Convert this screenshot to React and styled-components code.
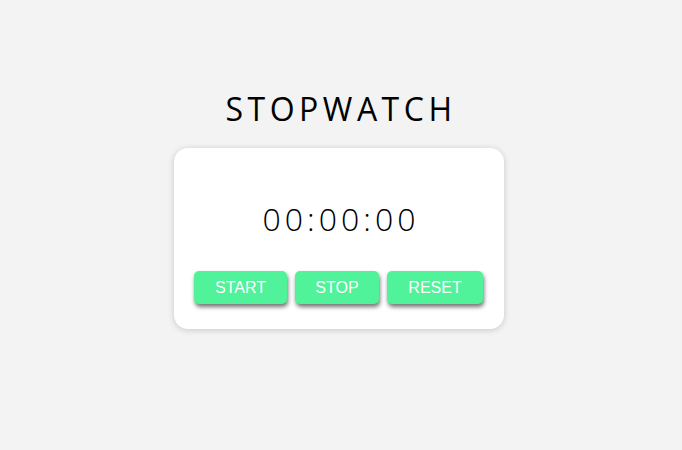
import React, { useState, useEffect, useRef } from 'react'
import styled, { createGlobalStyle } from 'styled-components'

const GlobalStyle = createGlobalStyle`
  html, body {
    margin: 0;
    padding: 0;
    background: #f3f3f3;
  }
`

const Page = styled.div`
  width: 100%;
  min-height: 450px;
  display: flex;
  flex-direction: column;
  align-items: center;
  padding: 90px 4px 0 0;
  box-sizing: border-box;
`

const Title = styled.h1`
  margin: 0 0 20px 0;
  padding-left: 4px;
  font-family: "Open Sans", "DejaVu Sans", sans-serif;
  font-weight: 400;
  font-size: 32px;
  line-height: 38px;
  letter-spacing: 4.5px;
  color: #000;
`

const Card = styled.div`
  width: 330px;
  box-sizing: border-box;
  background: #fff;
  border-radius: 14px;
  box-shadow: 0 1px 6px rgba(0, 0, 0, 0.18);
  padding: 50px 20px 25px 20px;
  display: flex;
  flex-direction: column;
  align-items: center;
`

const Time = styled.div`
  font-family: "Open Sans", "DejaVu Sans", sans-serif;
  font-weight: 300;
  font-size: 32px;
  line-height: 42px;
  letter-spacing: 4px;
  padding-left: 4px;
  color: #000;
  margin-bottom: 31px;
`

const Buttons = styled.div`
  display: flex;
  gap: 8px;
  justify-content: flex-start;
  width: 100%;
`

const Button = styled.button`
  width: ${p => p.$w}px;
  height: 33px;
  border: none;
  border-radius: 5px;
  background: #50f29a;
  color: #fff;
  font-family: "Liberation Sans", Arial, sans-serif;
  font-size: 16px;
  box-shadow: 1px 3px 4px rgba(0, 0, 0, 0.55);
  cursor: pointer;
  padding: 0;
`

const pad = n => String(n).padStart(2, '0')

export default function App() {
  const [ticks, setTicks] = useState(0)
  const [running, setRunning] = useState(false)
  const timer = useRef(null)

  useEffect(() => {
    if (running) {
      timer.current = setInterval(() => setTicks(t => t + 1), 10)
    }
    return () => clearInterval(timer.current)
  }, [running])

  const cs = ticks % 100
  const s = Math.floor(ticks / 100) % 60
  const m = Math.floor(ticks / 6000)

  return (
    <>
      <GlobalStyle />
      <Page>
        <Title>STOPWATCH</Title>
        <Card>
          <Time>{pad(m)}:{pad(s)}:{pad(cs)}</Time>
          <Buttons>
            <Button $w={93} onClick={() => setRunning(true)}>START</Button>
            <Button $w={84} onClick={() => setRunning(false)}>STOP</Button>
            <Button $w={96} onClick={() => { setRunning(false); setTicks(0) }}>RESET</Button>
          </Buttons>
        </Card>
      </Page>
    </>
  )
}
